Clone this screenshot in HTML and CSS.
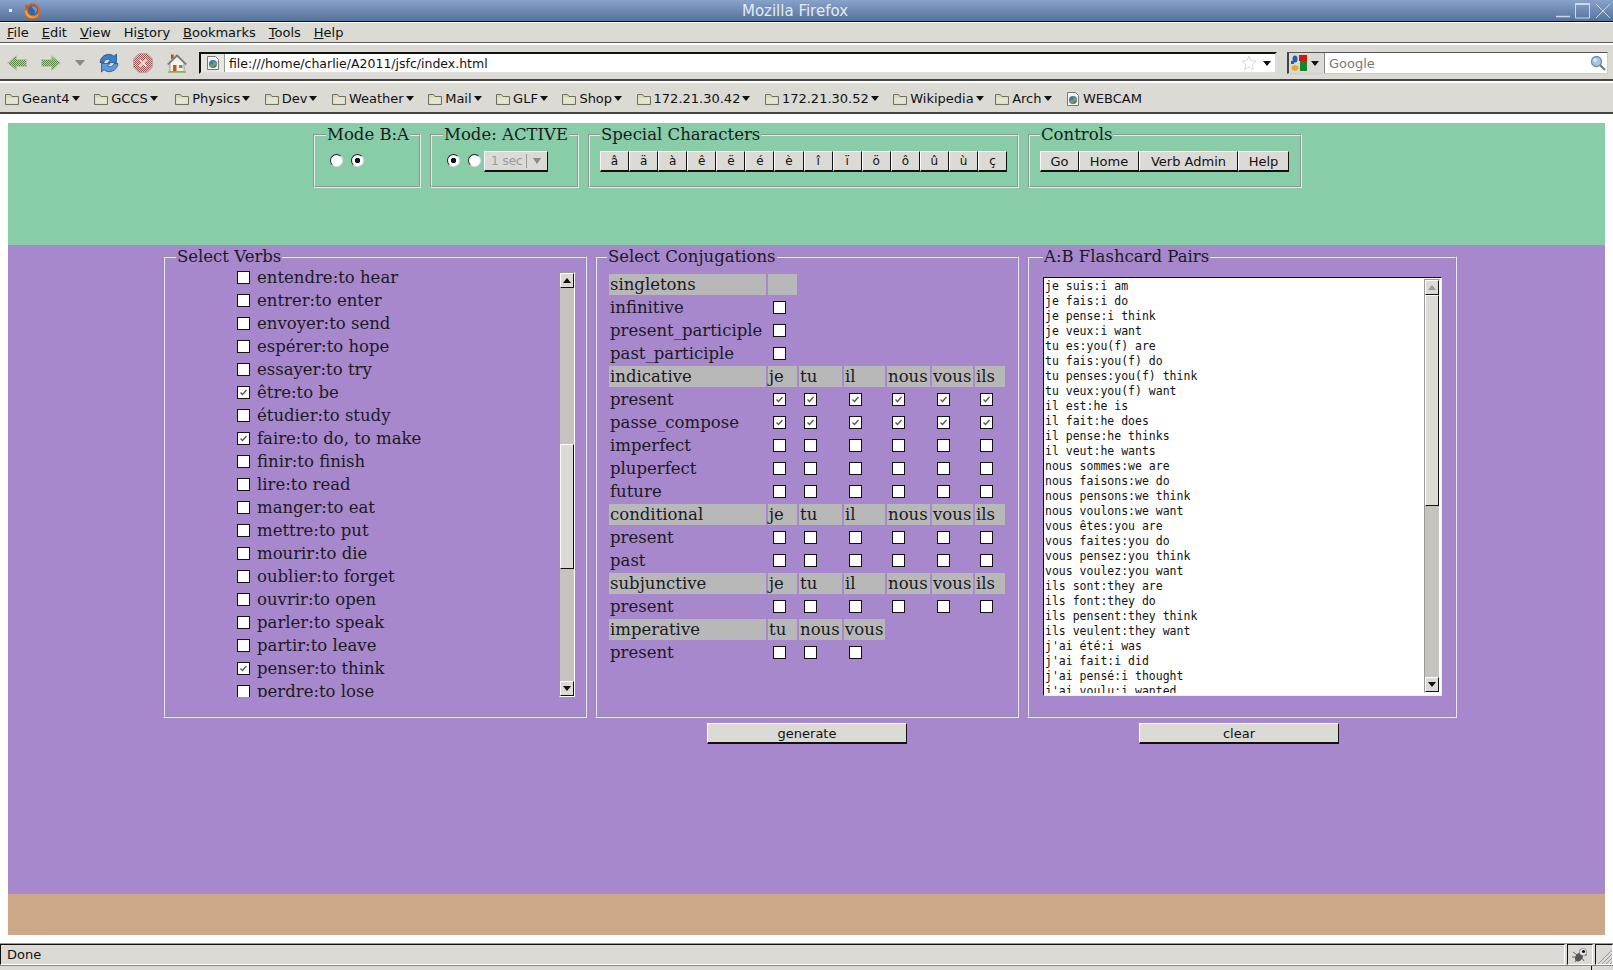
FILE: index.html
```html
<!DOCTYPE html>
<html lang="en">
<head>
    <meta charset="UTF-8">
    <title>Mozilla Firefox</title>
    <link rel="stylesheet" href="styles.css">
</head>
<body>
    <svg class="sprite" aria-hidden="true">
        <defs>
            <pattern id="dithGreen" width="2" height="2" patternUnits="userSpaceOnUse">
                <rect width="2" height="2" fill="#b4cba2"/>
                <rect width="1" height="1" fill="#5e8a4c"/>
                <rect x="1" y="1" width="1" height="1" fill="#5e8a4c"/>
            </pattern>
            <pattern id="dithRed" width="2" height="2" patternUnits="userSpaceOnUse">
                <rect width="2" height="2" fill="#d8d0cc"/>
                <rect width="1" height="1" fill="#99504c"/>
                <rect x="1" y="1" width="1" height="1" fill="#99504c"/>
            </pattern>
            <symbol id="folder" viewBox="0 0 16 16">
                <path d="M1.5 13.5V3.5h5l1.5 2h6.500v8z" fill="#d3d8b8" stroke="#6f7060"/>
                <path d="M2.500 12.500V6.500h11v6z" fill="#e4e7d0"/>
            </symbol>
            <symbol id="pageIcon" viewBox="0 0 16 16">
                <path d="M2.500 1.500h8l3 3v10h-11z" fill="#f4f4f0" stroke="#777"/>
                <circle cx="8" cy="9" r="4" fill="#3f78b5"/>
                <path d="M6 6.500c2-.5 3 1 2 2s-3 .5-3 2 2 2 3 1.500 1-2 3-2 0-3-1-3.500z" fill="#7ba04a"/>
            </symbol>
        </defs>
    </svg>

    <!-- window title -->
    <div class="titlebar">
        <span class="wm-dot"></span>
        <svg class="ff-logo" viewBox="0 0 18 18">
            <circle cx="9.500" cy="9.500" r="8" fill="#e2631a"/>
            <path d="M3 1.500c.5 1.500 1 2.500 2 3L9 .8 8 3.500l3.500-2 .5 2L6 8 2 6z" fill="#d9501a"/>
            <circle cx="10" cy="8.500" r="5" fill="#2f67a8"/>
            <path d="M8.500 4.500c2.500-.8 5 .5 5.500 3 .2 2-1 3.500-2.500 4 1-1.500.5-3.500-1-4.500-.8-.8-1.500-1.500-2-2.500z" fill="#6d9ccc"/>
            <path d="M2 9c0 4 3.500 7.500 8 7 3-.3 5-2 6-4.500-2 2.500-5 3.500-8 2.500-2.500-.8-4-3-4-5.500z" fill="#f4a52c"/>
        </svg>
        <span class="title-text">Mozilla Firefox</span>
        <div class="wm-buttons">
            <svg width="15" height="15" viewBox="0 0 15 15"><path d="M0 13.500h14" stroke="#cfd8e6" stroke-width="1.500"/></svg>
            <svg width="16" height="16" viewBox="0 0 16 16"><path d="M.5 1v14h14V1z" fill="none" stroke="#cfd8e6"/><path d="M0 1h15" stroke="#cfd8e6" stroke-width="2"/></svg>
            <svg width="16" height="16" viewBox="0 0 16 16"><path d="M1 1l14 14M15 1L1 15" stroke="#cfd8e6"/></svg>
        </div>
    </div>

    <div class="menubar">
        <span><u>F</u>ile</span>
        <span><u>E</u>dit</span>
        <span><u>V</u>iew</span>
        <span>Hi<u>s</u>tory</span>
        <span><u>B</u>ookmarks</span>
        <span><u>T</u>ools</span>
        <span><u>H</u>elp</span>
    </div>

    <!-- navigation toolbar -->
    <div class="navbar">
        <svg class="nav-icon" viewBox="0 0 20 20"><path d="M.5 10L9.500 2.500V6.500h10v7h-10v4z" fill="url(#dithGreen)" stroke="#b9c7a8"/></svg>
        <svg class="nav-icon" viewBox="0 0 20 20"><path d="M19.500 10L10.500 2.500V6.500H.5v7h10v4z" fill="url(#dithGreen)" stroke="#b9c7a8"/></svg>
        <svg class="nav-drop" viewBox="0 0 10 6"><path d="M0 0h10L5 6z" fill="#8a8a86"/></svg>
        <svg class="nav-icon" viewBox="0 0 20 20">
            <path d="M1 9.500C1.500 4 6.500.5 11.500 1.500c1.500.3 2.500 1 3.500 1.800L17.500 1v8.500H9l2.500-2.500C9 5.500 5.500 6.500 5 9.500z" fill="#3b7fc4" stroke="#1f4f8a" stroke-width=".8"/>
            <path d="M19 10.500c-.5 5.500-5.500 9-10.500 8-1.500-.3-2.500-1-3.500-1.800L2.500 19v-8.500H11L8.500 13c2.500 1.500 6 .5 6.500-2.500z" fill="#5a9bd8" stroke="#1f4f8a" stroke-width=".8"/>
        </svg>
        <svg class="nav-icon" viewBox="0 0 20 20">
            <path d="M6 .5h8L19.500 6v8L14 19.500H6L.5 14V6z" fill="url(#dithRed)" stroke="#b8a8a4"/>
            <path d="M6.500 6.500l7 7M13.500 6.500l-7 7" stroke="#ead9d6" stroke-width="1.800"/>
        </svg>
        <svg class="nav-icon" viewBox="0 0 20 20">
            <path d="M4 6V1.500h2.500V5z" fill="#a5482c"/>
            <path d="M10 2.500L17 10v8.500H3V10z" fill="#f4f2ea"/>
            <path d="M.5 11L10 1.500 19.500 11l-1 .7L10 3.500 1.500 11.700z" fill="#7d7d78" stroke="#56564f" stroke-width=".5"/>
            <path d="M3 10v8.500h14V10" fill="none" stroke="#8a8a84" stroke-width=".8"/>
            <path d="M6 12h3.500v6.500H6z" fill="#d2521c"/>
            <path d="M12 12h3.500v3H12z" fill="#85857f"/>
            <path d="M1 19h18" stroke="#8db04a" stroke-width="1.500"/>
        </svg>
        <div class="urlbar">
            <span class="url-favicon"><svg class="bm-icon"><use href="#pageIcon"/></svg></span>
            <span class="url-text">file:///home/charlie/A2011/jsfc/index.html</span>
            <svg class="url-star" viewBox="0 0 16 16"><path d="M8 1l2.100 4.600 5 .6-3.700 3.400 1 4.900L8 12.100l-4.400 2.400 1-4.900L.9 6.200l5-.6z" fill="#fff" stroke="#d8d8d8"/></svg>
            <span class="arrow-down"></span>
        </div>
        <div class="searchbar">
            <span class="search-engine">
                <svg class="g-logo" viewBox="0 0 16 16">
                    <path d="M8 0h8v6H8z" fill="#d8140c"/>
                    <ellipse cx="4" cy="4" rx="2.500" ry="3.500" fill="#1d5fb8"/>
                    <path d="M0 6h3v3H0z" fill="#1d5fb8"/>
                    <path d="M9 6h7v10H9z" fill="#11862e"/>
                    <ellipse cx="4" cy="13" rx="3.500" ry="2.800" fill="#e9a91c"/>
                </svg>
                <span class="arrow-down"></span>
            </span>
            <span class="search-text">Google</span>
            <svg class="search-glass" viewBox="0 0 16 16">
                <path d="M10 10l5 5" stroke="#777" stroke-width="2.200"/>
                <circle cx="6.500" cy="6.500" r="5" fill="#a8c8e8" stroke="#6f8fb0" stroke-width="1.300"/>
                <circle cx="5" cy="5" r="1.800" fill="#dcebf8"/>
            </svg>
        </div>
    </div>

    <div class="bookmarks">
        <span class="bm"><svg class="bm-icon"><use href="#folder"/></svg>Geant4<span class="arrow-down"></span></span>
        <span class="bm bm-gccs"><svg class="bm-icon"><use href="#folder"/></svg>GCCS<span class="arrow-down"></span></span>
        <span class="bm"><svg class="bm-icon"><use href="#folder"/></svg>Physics<span class="arrow-down"></span></span>
        <span class="bm"><svg class="bm-icon"><use href="#folder"/></svg>Dev<span class="arrow-down"></span></span>
        <span class="bm"><svg class="bm-icon"><use href="#folder"/></svg>Weather<span class="arrow-down"></span></span>
        <span class="bm"><svg class="bm-icon"><use href="#folder"/></svg>Mail<span class="arrow-down"></span></span>
        <span class="bm"><svg class="bm-icon"><use href="#folder"/></svg>GLF<span class="arrow-down"></span></span>
        <span class="bm"><svg class="bm-icon"><use href="#folder"/></svg>Shop<span class="arrow-down"></span></span>
        <span class="bm"><svg class="bm-icon"><use href="#folder"/></svg>172.21.30.42<span class="arrow-down"></span></span>
        <span class="bm"><svg class="bm-icon"><use href="#folder"/></svg>172.21.30.52<span class="arrow-down"></span></span>
        <span class="bm bm-wiki"><svg class="bm-icon"><use href="#folder"/></svg>Wikipedia<span class="arrow-down"></span></span>
        <span class="bm"><svg class="bm-icon"><use href="#folder"/></svg>Arch<span class="arrow-down"></span></span>
        <span class="bm"><svg class="bm-icon"><use href="#pageIcon"/></svg>WEBCAM</span>
    </div>

    <!-- page content -->
    <div class="page">
        <div class="top-panel">
            <fieldset class="box box-mode-ab">
                <legend>Mode B:A</legend>
                <input type="radio" name="ab">
                <input type="radio" name="ab" checked>
            </fieldset>
            <fieldset class="box box-mode">
                <legend>Mode: ACTIVE</legend>
                <input type="radio" name="act" checked>
                <input type="radio" name="act">
                <span class="select-disabled"><span class="select-value">1 sec</span><span class="select-arrow"></span></span>
            </fieldset>
            <fieldset class="box box-chars">
                <legend>Special Characters</legend>
                <button class="btn btn-char">â</button>
                <button class="btn btn-char">ä</button>
                <button class="btn btn-char">à</button>
                <button class="btn btn-char">ê</button>
                <button class="btn btn-char">ë</button>
                <button class="btn btn-char">é</button>
                <button class="btn btn-char">è</button>
                <button class="btn btn-char">î</button>
                <button class="btn btn-char">ï</button>
                <button class="btn btn-char">ö</button>
                <button class="btn btn-char">ô</button>
                <button class="btn btn-char">û</button>
                <button class="btn btn-char">ù</button>
                <button class="btn btn-char">ç</button>
            </fieldset>
            <fieldset class="box box-controls">
                <legend>Controls</legend>
                <button class="btn btn-go">Go</button>
                <button class="btn btn-home">Home</button>
                <button class="btn btn-admin">Verb Admin</button>
                <button class="btn btn-help">Help</button>
            </fieldset>
        </div>

        <div class="main-panel">
            <fieldset class="box box-verbs">
                <legend>Select Verbs</legend>
                <div class="verbs-wrap">
                    <div class="verbs">
                        <label><input type="checkbox">entendre:to hear</label>
                        <label><input type="checkbox">entrer:to enter</label>
                        <label><input type="checkbox">envoyer:to send</label>
                        <label><input type="checkbox">espérer:to hope</label>
                        <label><input type="checkbox">essayer:to try</label>
                        <label><input type="checkbox" checked>être:to be</label>
                        <label><input type="checkbox">étudier:to study</label>
                        <label><input type="checkbox" checked>faire:to do, to make</label>
                        <label><input type="checkbox">finir:to finish</label>
                        <label><input type="checkbox">lire:to read</label>
                        <label><input type="checkbox">manger:to eat</label>
                        <label><input type="checkbox">mettre:to put</label>
                        <label><input type="checkbox">mourir:to die</label>
                        <label><input type="checkbox">oublier:to forget</label>
                        <label><input type="checkbox">ouvrir:to open</label>
                        <label><input type="checkbox">parler:to speak</label>
                        <label><input type="checkbox">partir:to leave</label>
                        <label><input type="checkbox" checked>penser:to think</label>
                        <label><input type="checkbox">perdre:to lose</label>
                    </div>
                    <div class="scrollbar scrollbar-verbs">
                        <span class="sb-btn sb-up"></span>
                        <span class="sb-thumb"></span>
                        <span class="sb-btn sb-down"></span>
                    </div>
                </div>
            </fieldset>

            <fieldset class="box box-conj">
                <legend>Select Conjugations</legend>
                <table class="conj">
                    <colgroup>
                        <col class="c-name"><col class="c-je"><col class="c-tu"><col class="c-il"><col class="c-nous"><col class="c-vous"><col class="c-ils">
                    </colgroup>
                    <tr><th>singletons</th><th></th></tr>
                    <tr><td>infinitive</td><td><input type="checkbox"></td></tr>
                    <tr><td>present_participle</td><td><input type="checkbox"></td></tr>
                    <tr><td>past_participle</td><td><input type="checkbox"></td></tr>
                    <tr><th>indicative</th><th>je</th><th>tu</th><th>il</th><th>nous</th><th>vous</th><th>ils</th></tr>
                    <tr><td>present</td><td><input type="checkbox" checked></td><td><input type="checkbox" checked></td><td><input type="checkbox" checked></td><td><input type="checkbox" checked></td><td><input type="checkbox" checked></td><td><input type="checkbox" checked></td></tr>
                    <tr><td>passe_compose</td><td><input type="checkbox" checked></td><td><input type="checkbox" checked></td><td><input type="checkbox" checked></td><td><input type="checkbox" checked></td><td><input type="checkbox" checked></td><td><input type="checkbox" checked></td></tr>
                    <tr><td>imperfect</td><td><input type="checkbox"></td><td><input type="checkbox"></td><td><input type="checkbox"></td><td><input type="checkbox"></td><td><input type="checkbox"></td><td><input type="checkbox"></td></tr>
                    <tr><td>pluperfect</td><td><input type="checkbox"></td><td><input type="checkbox"></td><td><input type="checkbox"></td><td><input type="checkbox"></td><td><input type="checkbox"></td><td><input type="checkbox"></td></tr>
                    <tr><td>future</td><td><input type="checkbox"></td><td><input type="checkbox"></td><td><input type="checkbox"></td><td><input type="checkbox"></td><td><input type="checkbox"></td><td><input type="checkbox"></td></tr>
                    <tr><th>conditional</th><th>je</th><th>tu</th><th>il</th><th>nous</th><th>vous</th><th>ils</th></tr>
                    <tr><td>present</td><td><input type="checkbox"></td><td><input type="checkbox"></td><td><input type="checkbox"></td><td><input type="checkbox"></td><td><input type="checkbox"></td><td><input type="checkbox"></td></tr>
                    <tr><td>past</td><td><input type="checkbox"></td><td><input type="checkbox"></td><td><input type="checkbox"></td><td><input type="checkbox"></td><td><input type="checkbox"></td><td><input type="checkbox"></td></tr>
                    <tr><th>subjunctive</th><th>je</th><th>tu</th><th>il</th><th>nous</th><th>vous</th><th>ils</th></tr>
                    <tr><td>present</td><td><input type="checkbox"></td><td><input type="checkbox"></td><td><input type="checkbox"></td><td><input type="checkbox"></td><td><input type="checkbox"></td><td><input type="checkbox"></td></tr>
                    <tr><th>imperative</th><th>tu</th><th>nous</th><th>vous</th></tr>
                    <tr><td>present</td><td><input type="checkbox"></td><td><input type="checkbox"></td><td><input type="checkbox"></td></tr>
                </table>
            </fieldset>

            <fieldset class="box box-pairs">
                <legend>A:B Flashcard Pairs</legend>
                <div class="pairs-area">
                    <div class="pairs-text">je suis:i am
je fais:i do
je pense:i think
je veux:i want
tu es:you(f) are
tu fais:you(f) do
tu penses:you(f) think
tu veux:you(f) want
il est:he is
il fait:he does
il pense:he thinks
il veut:he wants
nous sommes:we are
nous faisons:we do
nous pensons:we think
nous voulons:we want
vous êtes:you are
vous faites:you do
vous pensez:you think
vous voulez:you want
ils sont:they are
ils font:they do
ils pensent:they think
ils veulent:they want
j'ai été:i was
j'ai fait:i did
j'ai pensé:i thought
j'ai voulu:i wanted</div>
                    <div class="scrollbar scrollbar-pairs">
                        <span class="sb-btn sb-up sb-up-light"></span>
                        <span class="sb-thumb"></span>
                        <span class="sb-btn sb-down"></span>
                    </div>
                </div>
            </fieldset>

            <div></div>
            <div class="action"><button class="btn btn-wide">generate</button></div>
            <div class="action action-clear"><button class="btn btn-wide">clear</button></div>
        </div>

        <div class="bottom-panel"></div>
    </div>

    <div class="statusbar">
        <span class="status-cell status-done">Done</span>
        <span class="status-cell status-bug">
            <svg class="bug" viewBox="0 0 16 16">
                <path d="M1 5l4 3M0 10l5 0M3 15l3-4M8 2l2 3M15 8l-3 0M12 14l-2-3" stroke="#666" stroke-width="1"/>
                <ellipse cx="7" cy="10" rx="3.500" ry="5" transform="rotate(35 7 10)" fill="#555"/>
                <circle cx="11" cy="5" r="3.500" fill="#eee" stroke="#777" stroke-width=".7"/>
                <circle cx="11.500" cy="4.500" r="1.600" fill="#111"/>
            </svg>
        </span>
        <span class="status-cell status-grip">
            <svg class="grip" viewBox="0 0 14 14"><path d="M0 14L14 0M4 14L14 4M8 14l6-6M12 14l2-2" stroke="#999" stroke-width="1"/></svg>
        </span>
    </div>
    <div class="taskstrip"><span class="task-left"></span></div>
</body>
</html>
```

FILE: styles.css
```css
* {
    box-sizing: border-box;
}

body {
    margin: 0;
    width: 1613px;
    height: 970px;
    overflow: hidden;
    background-color: #fff;
    font-family: "DejaVu Sans", sans-serif;
    font-size: 13px;
    color: #111;
    display: flex;
    flex-direction: column;
}

.sprite {
    display: block;
    width: 0;
    height: 0;
}

/* window title */
.titlebar {
    height: 22px;
    display: flex;
    align-items: center;
    background: linear-gradient(#88a3cb, #56719a);
    border-bottom: 1px solid #111;
}
.wm-dot {
    width: 3px;
    height: 3px;
    margin-left: 9px;
    background-color: #e8eef6;
}
.ff-logo {
    width: 18px;
    height: 18px;
    margin-left: 11px;
}
.title-text {
    flex: 1;
    text-align: center;
    padding-left: 33px;
    padding-right: 40px;
    color: #e4eaf3;
    font-size: 15px;
}
.wm-buttons {
    display: flex;
    gap: 4px;
    padding-right: 2px;
}

/* menus and toolbars */
.menubar {
    height: 21px;
    display: flex;
    align-items: center;
    gap: 13px;
    padding-left: 7px;
    background-color: #dbdad5;
    border-bottom: 1px solid #555;
    border-top: 1px solid #fff;
}

.navbar {
    height: 37px;
    margin-top: 1px;
    display: flex;
    align-items: center;
    gap: 14px;
    padding-left: 7px;
    padding-top: 2px;
    background-color: #dbdad5;
    border-top: 1px solid #fff;
    border-bottom: 2px solid #444;
}
.nav-icon {
    width: 20px;
    height: 20px;
}
.nav-drop {
    width: 10px;
    height: 6px;
}
.urlbar {
    width: 1078px;
    height: 22px;
    margin-left: -2px;
    display: flex;
    align-items: center;
    background-color: #fff;
    border: 2px solid #111;
    border-right: 2px solid #ddd;
    border-bottom: 2px solid #ddd;
}
.url-favicon {
    width: 24px;
    height: 100%;
    display: flex;
    align-items: center;
    justify-content: center;
    background-color: #e8e7e2;
    border-right: 1px solid #999;
}
.url-text {
    flex: 1;
    padding-left: 4px;
    font-size: 12.500px;
}
.url-star {
    width: 16px;
    height: 16px;
    margin-right: 4px;
}
.arrow-down {
    display: inline-block;
    width: 0;
    height: 0;
    margin: 0 4px 0 2px;
    border-left: 4.500px solid transparent;
    border-right: 4.500px solid transparent;
    border-top: 5px solid #111;
}
.searchbar {
    width: 321px;
    height: 22px;
    margin-left: -4px;
    display: flex;
    align-items: center;
    background-color: #fff;
    border: 2px solid #444;
    border-right: 1px solid #ccc;
    border-bottom: 1px solid #ccc;
    border-top: 1px solid #555;
}
.search-engine {
    width: 36px;
    height: 100%;
    display: flex;
    align-items: center;
    gap: 2px;
    padding-left: 2px;
    background-color: #dbdad5;
    border-right: 1px solid #888;
}
.g-logo {
    width: 16px;
    height: 16px;
}
.search-text {
    flex: 1;
    padding-left: 4px;
    color: #777;
}
.search-glass {
    width: 16px;
    height: 16px;
    margin-right: 1px;
}

.bookmarks {
    height: 32px;
    margin-top: 1px;
    display: flex;
    align-items: center;
    gap: 13.500px;
    padding-left: 4px;
    padding-top: 2px;
    background-color: #dbdad5;
    border-top: 1px solid #fff;
    border-bottom: 2px solid #444;
}
.bm {
    display: flex;
    align-items: center;
    gap: 2px;
}
.bm-gccs {
    margin-right: 3px;
}
.bm-wiki {
    margin-right: -3px;
}
.bm-icon {
    width: 16px;
    height: 16px;
}
.bm .arrow-down {
    margin: 0;
}

/* page content */
.page {
    margin: 9px 8px 0;
    font-family: "DejaVu Serif", serif;
    font-size: 16.500px;
    color: #1a1a22;
}
.top-panel {
    height: 122px;
    padding-top: 3px;
    padding-left: 305px;
    display: flex;
    align-items: flex-start;
    gap: 9px;
    background-color: #88cca8;
}
.main-panel {
    height: 649px;
    padding: 3px 0 0 155px;
    display: grid;
    grid-template-columns: 424px 424px 430px;
    grid-template-rows: 470px 21px;
    column-gap: 8px;
    row-gap: 5px;
    background-color: #a888cc;
}
.bottom-panel {
    height: 41px;
    background-color: #cca888;
}

.box {
    margin: 0;
    min-width: 0;
    border: 2px groove #e8e8e8;
}
.box legend {
    padding: 0 1px;
    height: 18px;
    line-height: 18px;
    white-space: nowrap;
}

.box-mode-ab,
.box-mode,
.box-chars,
.box-controls {
    height: 62px;
    display: flex;
    align-items: flex-start;
    padding: 7px 10px 0;
}
.box-mode-ab {
    width: 108px;
    padding: 10px 0 0 11px;
    gap: 8px;
}
.box-mode {
    width: 149px;
    padding: 10px 0 0 11px;
    gap: 8px;
}
.box-mode-ab input:first-of-type,
.box-mode input:first-of-type {
    margin-left: 4px;
}
.box-chars {
    width: 431px;
}
.box-controls {
    width: 274px;
}

input[type="radio"],
input[type="checkbox"] {
    appearance: none;
    flex: none;
    width: 13px;
    height: 13px;
    margin: 0;
    background-color: #fff;
}
input[type="radio"] {
    border: 1px solid #222;
    border-right-color: #ddd;
    border-bottom-color: #ddd;
    border-radius: 50%;
}
input[type="radio"]:checked {
    background: radial-gradient(circle, #111 0, #111 2.500px, #fff 3px);
}
input[type="checkbox"] {
    border: 1px solid #111;
    vertical-align: middle;
}
input[type="checkbox"]:checked {
    background: #fff url("data:image/svg+xml,%3Csvg xmlns='http://www.w3.org/2000/svg' viewBox='0 0 11 11'%3E%3Cpath d='M2.500 5.500l2 2 4-4.500' fill='none' stroke='%23555' stroke-width='1.300'/%3E%3C/svg%3E") center/11px no-repeat;
}

.select-disabled {
    width: 64px;
    height: 21px;
    margin: -3px 0 0 -5px;
    display: flex;
    align-items: center;
    background-color: #dbdad5;
    border: 1px solid #fff;
    border-right-color: #111;
    border-bottom: 2px solid #111;
    font-family: "DejaVu Sans", sans-serif;
    font-size: 12px;
    color: #999;
}
.select-value {
    flex: 1;
    padding-left: 6px;
    border-right: 1px solid #999;
}
.select-arrow {
    width: 0;
    height: 0;
    margin: 0 6px;
    border-left: 4.500px solid transparent;
    border-right: 4.500px solid transparent;
    border-top: 6px solid #888;
}

.btn {
    height: 21px;
    margin: 0;
    padding: 0;
    background-color: #dbdad5;
    border: 1px solid #fff;
    border-right-color: #111;
    border-bottom: 2px solid #111;
    border-radius: 0;
    font-family: "DejaVu Sans", sans-serif;
    font-size: 13px;
    color: #111;
}
.btn-char {
    width: 29.450px;
    font-size: 12px;
}
.btn-go { width: 39px; }
.btn-home { width: 60px; }
.btn-admin { width: 99px; }
.btn-help { width: 51px; }
.btn-wide { width: 200px; }

.action {
    display: flex;
    justify-content: center;
}
.action-clear {
    padding-right: 6px;
}

/* verbs */
.box-verbs {
    padding: 0 10px 0 11px;
}
.verbs-wrap {
    height: 431px;
    display: flex;
}
.verbs {
    flex: 1;
    overflow: hidden;
}
.verbs label {
    height: 23px;
    padding-left: 61px;
    display: flex;
    align-items: center;
    gap: 7px;
}

.scrollbar {
    width: 16px;
    display: flex;
    flex-direction: column;
    background-color: #c4c3bd;
    border: 1px solid #fff;
    border-left-color: #999;
    border-top-color: #999;
}
.scrollbar-verbs {
    margin-top: 6px;
}
.sb-btn {
    height: 15px;
    flex: none;
    display: flex;
    align-items: center;
    justify-content: center;
    background-color: #dbdad5;
    border: 1px solid #fff;
    border-right-color: #111;
    border-bottom-color: #111;
}
.sb-btn::after {
    content: "";
    width: 0;
    height: 0;
    border-left: 4px solid transparent;
    border-right: 4px solid transparent;
}
.sb-up::after {
    border-bottom: 5px solid #111;
}
.sb-up-light::after {
    border-bottom-color: #999;
}
.sb-down {
    margin-top: auto;
}
.sb-down::after {
    border-top: 5px solid #111;
}
.sb-thumb {
    flex: none;
    background-color: #dbdad5;
    border: 1px solid #fff;
    border-right-color: #111;
    border-bottom-color: #111;
}
.scrollbar-verbs .sb-thumb {
    height: 125px;
    margin-top: 156px;
}
.scrollbar-pairs .sb-thumb {
    height: 211px;
}

/* conjugation table */
.box-conj {
    padding: 0 10px;
}
.conj {
    margin-top: 6px;
    table-layout: fixed;
    width: 398px;
    border-collapse: separate;
    border-spacing: 2px;
}
.c-name { width: 157px; }
.c-je { width: 29px; }
.c-tu { width: 43px; }
.c-il { width: 41px; }
.c-nous { width: 43px; }
.c-vous { width: 41px; }
.c-ils { width: 30px; }
.conj th,
.conj td {
    height: 21px;
    padding: 0 1px;
    font-weight: normal;
    text-align: left;
    white-space: nowrap;
    line-height: 19px;
}
.conj th {
    background-color: #b8b8b8;
}
.conj td input {
    display: block;
    margin-left: 4px;
}

/* pairs */
.box-pairs {
    padding: 11px 13px 0 14px;
}
.pairs-area {
    height: 419px;
    display: flex;
    padding: 1px 1px 2px 0;
    background-color: #fff;
    border: 1px solid #111;
    border-right-color: #eee;
    border-bottom-color: #eee;
}
.pairs-text {
    flex: 1;
    overflow: hidden;
    padding: 0 0 0 1px;
    white-space: pre;
    font-family: "DejaVu Sans Mono", monospace;
    font-size: 11.500px;
    line-height: 15px;
    color: #111;
}

/* status bar */
.statusbar {
    height: 22px;
    margin-top: 8px;
    display: flex;
    gap: 2px;
    background-color: #dbdad5;
    border-top: 1px solid #999;
}
.status-cell {
    display: flex;
    align-items: center;
    background-color: #dbdad5;
    border-top: 1px solid #111;
    border-left: 1px solid #111;
    border-right: 1px solid #fff;
    border-bottom: 1px solid #fff;
}
.status-done {
    flex: 1;
    padding-left: 6px;
}
.status-bug {
    width: 26px;
    justify-content: center;
}
.bug {
    width: 16px;
    height: 16px;
}
.status-grip {
    width: 18px;
    align-items: flex-end;
    justify-content: flex-end;
}
.grip {
    width: 14px;
    height: 14px;
}
.taskstrip {
    flex: 1;
    background-color: #dbdad5;
    border-top: 1px solid #888;
}
.task-left {
    display: block;
    width: 1592px;
    height: 100%;
    border-right: 1px solid #111;
}
```
